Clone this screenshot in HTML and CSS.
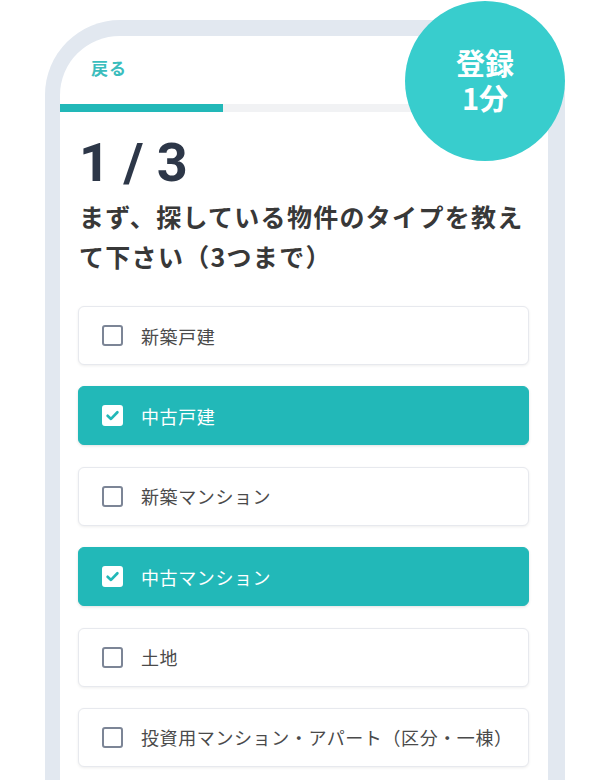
FILE: index.html
```html
<!DOCTYPE html>
<html lang="ja">
<head>
  <meta charset="UTF-8">
  <title>物件タイプの選択</title>
  <link rel="stylesheet" href="styles.css">
</head>
<body>
  <div class="badge">
    <span class="badge-line">登録</span>
    <span class="badge-line">1分</span>
  </div>

  <div class="phone">
    <div class="back">戻る</div>
    <div class="progress"><div class="progress-fill"></div></div>

    <div class="content">
      <div class="step">1 / 3</div>
      <h2 class="question">まず、探している物件のタイプを教えて下さい（3つまで）</h2>

      <div class="options">
        <div class="option">
          <span class="box"></span>
          <span class="label">新築戸建</span>
        </div>
        <div class="option selected">
          <span class="box"><svg viewBox="0 0 17 17" width="17" height="17"><polyline points="3.6,8.8 7,11.9 13.4,5.2" fill="none" stroke="#22b8b8" stroke-width="2.7" stroke-linecap="round" stroke-linejoin="round"/></svg></span>
          <span class="label">中古戸建</span>
        </div>
        <div class="option">
          <span class="box"></span>
          <span class="label">新築マンション</span>
        </div>
        <div class="option selected">
          <span class="box"><svg viewBox="0 0 17 17" width="17" height="17"><polyline points="3.6,8.8 7,11.9 13.4,5.2" fill="none" stroke="#22b8b8" stroke-width="2.7" stroke-linecap="round" stroke-linejoin="round"/></svg></span>
          <span class="label">中古マンション</span>
        </div>
        <div class="option">
          <span class="box"></span>
          <span class="label">土地</span>
        </div>
        <div class="option">
          <span class="box"></span>
          <span class="label">投資用マンション・アパート（区分・一棟）</span>
        </div>
      </div>
    </div>
  </div>
</body>
</html>
```

FILE: styles.css
```css
:root {
  --teal: #22b8b8;
  --frame: #e2e8f0;
  --text: #444;
}
* { box-sizing: border-box; }
body {
  margin: 0;
  height: 780px;
  overflow: hidden;
  background: #fff;
  font-family: "Noto Sans CJK JP", "Noto Sans", sans-serif;
  color: var(--text);
}
.phone {
  margin: 20px 0 0 45px;
  width: 520px;
  height: 760px;
  overflow: hidden;
  background: #fff;
  border: solid var(--frame);
  border-width: 16px 17px 0 15px;
  border-radius: 75px 75px 0 0;
}
.badge {
  position: absolute;
  left: 405px;
  top: 1px;
  width: 160px;
  height: 160px;
  border-radius: 50%;
  background: #38cdcd;
  color: #fff;
  font-weight: bold;
  font-size: 29px;
  display: flex;
  flex-direction: column;
  align-items: center;
  justify-content: center;
  padding-bottom: 2px;
  z-index: 10;
}
.badge-line {
  display: block;
  height: 35px;
  line-height: 35px;
}
.back {
  padding: 20px 0 0 31px;
  font-size: 17px;
  line-height: 24px;
  letter-spacing: 1px;
  font-weight: bold;
  color: #3bbdbd;
}
.progress {
  margin-top: 24px;
  height: 8px;
  background: #f1f2f4;
}
.progress-fill {
  width: 33.3%;
  height: 100%;
  background: var(--teal);
}
.content { padding: 0 19px 0 18px; }
.step {
  margin-top: 19px;
  font-family: Roboto, "Liberation Sans", sans-serif;
  font-weight: bold;
  font-size: 54px;
  line-height: 64px;
  color: #2d3748;
  padding-left: 1px;
}
.question {
  margin: 1px 0 0;
  font-size: 25px;
  line-height: 40px;
  letter-spacing: 1.3px;
  font-weight: bold;
  color: #383838;
  padding-left: 1px;
}
.options {
  margin-top: 30px;
  display: flex;
  flex-direction: column;
  gap: 21.4px;
}
.option {
  height: 59px;
  display: flex;
  align-items: center;
  padding-left: 23px;
  background: #fff;
  border: 1px solid #e7e9ee;
  border-radius: 6px;
  box-shadow: 0 1px 3px rgba(0,0,0,0.07);
}
.box {
  width: 21px;
  height: 21px;
  border: 2px solid #7c8596;
  border-radius: 3px;
  display: flex;
  align-items: center;
  justify-content: center;
  flex-shrink: 0;
}
.label {
  margin-left: 18px;
  font-size: 18px;
  letter-spacing: 0.6px;
  color: #4a4a4a;
}
.option.selected {
  background: var(--teal);
  border-color: var(--teal);
  box-shadow: 0 1px 3px rgba(0,0,0,0.12);
}
.option.selected .box {
  background: #fff;
  border-color: #fff;
}
.option.selected .label { color: #fff; }
```
